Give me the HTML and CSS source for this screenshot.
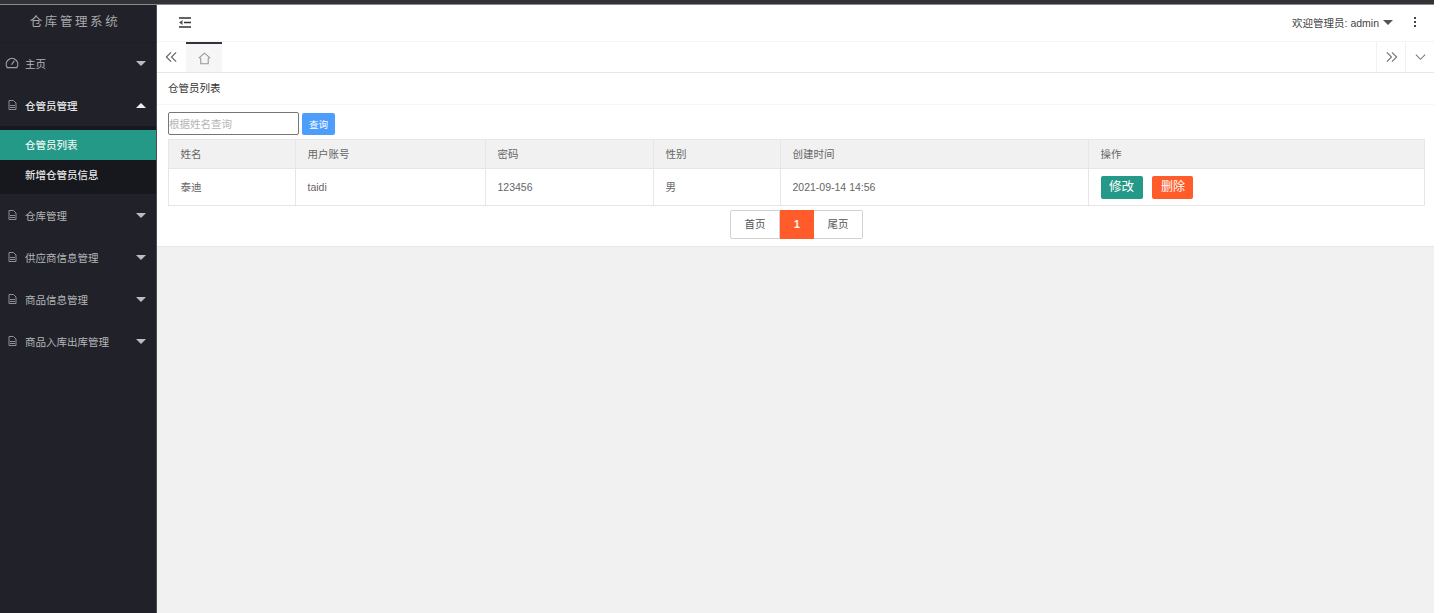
FILE: index.html
```html
<!DOCTYPE html>
<html lang="zh-CN">
<head>
    <meta charset="UTF-8">
    <title>仓库管理系统</title>
    <link rel="stylesheet" href="styles.css">
</head>
<body>
    <div class="topline"></div>
    <div class="layout">
        <aside class="side">
            <div class="logo">仓库管理系统</div>
            <ul class="nav">
                <li class="nav-item">
                    <svg class="nav-icon" viewBox="0 0 16 16"><path d="M2.6 13.2a6.6 6.6 0 1 1 10.8 0z" fill="none" stroke="currentColor" stroke-width="1.4"/><path d="M7.400 10 10.600 5.600" stroke="currentColor" stroke-width="1.4"/></svg>
                    <span class="nav-text">主页</span><span class="caret"></span>
                </li>
                <li class="nav-item open">
                    <svg class="nav-icon small" viewBox="0 0 9 10"><path d="M1 .5h4.500L8 3v6.500H1z" fill="none" stroke="currentColor"/><path d="M2 5.500h5M2 7.500h5" stroke="currentColor"/></svg>
                    <span class="nav-text">仓管员管理</span><span class="caret up"></span>
                </li>
                <li class="sub">
                    <div class="sub-item active">仓管员列表</div>
                    <div class="sub-item">新增仓管员信息</div>
                </li>
                <li class="nav-item">
                    <svg class="nav-icon small" viewBox="0 0 9 10"><path d="M1 .5h4.500L8 3v6.500H1z" fill="none" stroke="currentColor"/><path d="M2 5.500h5M2 7.500h5" stroke="currentColor"/></svg>
                    <span class="nav-text">仓库管理</span><span class="caret"></span>
                </li>
                <li class="nav-item">
                    <svg class="nav-icon small" viewBox="0 0 9 10"><path d="M1 .5h4.500L8 3v6.500H1z" fill="none" stroke="currentColor"/><path d="M2 5.500h5M2 7.500h5" stroke="currentColor"/></svg>
                    <span class="nav-text">供应商信息管理</span><span class="caret"></span>
                </li>
                <li class="nav-item">
                    <svg class="nav-icon small" viewBox="0 0 9 10"><path d="M1 .5h4.500L8 3v6.500H1z" fill="none" stroke="currentColor"/><path d="M2 5.500h5M2 7.500h5" stroke="currentColor"/></svg>
                    <span class="nav-text">商品信息管理</span><span class="caret"></span>
                </li>
                <li class="nav-item">
                    <svg class="nav-icon small" viewBox="0 0 9 10"><path d="M1 .5h4.500L8 3v6.500H1z" fill="none" stroke="currentColor"/><path d="M2 5.500h5M2 7.500h5" stroke="currentColor"/></svg>
                    <span class="nav-text">商品入库出库管理</span><span class="caret"></span>
                </li>
            </ul>
        </aside>

        <main class="main">
            <header class="header">
                <svg class="flex-icon" viewBox="0 0 12 11"><path d="M0 1h12M5 5.500h7M0 10h12" fill="none" stroke="#333" stroke-width="1.3"/><path d="M3.500 3v5L0 5.500z" fill="#555"/></svg>
                <div class="user">欢迎管理员: admin<span class="user-caret"></span></div>
                <div class="dots"><i></i><i></i><i></i></div>
            </header>

            <div class="tabs">
                <div class="tab-btn left">
                    <svg viewBox="0 0 14 12"><path d="M6.500 1 1.500 6l5 5M12 1 7 6l5 5" fill="none" stroke="#666" stroke-width="1.3"/></svg>
                </div>
                <div class="tab-home">
                    <svg viewBox="0 0 14 14"><path d="M7 1.200 1.400 6 3 7v5.600h8V7l1.600-1z" fill="none" stroke="#999" stroke-width="1.2"/></svg>
                </div>
                <div class="tab-space"></div>
                <div class="tab-btn right">
                    <svg viewBox="0 0 14 12"><path d="M2 1l5 5-5 5M7.500 1l5 5-5 5" fill="none" stroke="#777" stroke-width="1.3"/></svg>
                </div>
                <div class="tab-btn right">
                    <svg viewBox="0 0 14 12"><path d="M2 3.500l5 5 5-5" fill="none" stroke="#777" stroke-width="1.1"/></svg>
                </div>
            </div>

            <section class="panel">
                <div class="panel-title">仓管员列表</div>
                <div class="panel-body">
                    <form class="search">
                        <input class="search-input" type="text" placeholder="根据姓名查询">
                        <button type="button" class="search-btn">查询</button>
                    </form>
                    <table class="grid">
                        <colgroup>
                            <col class="c1"><col class="c2"><col class="c3"><col class="c4"><col class="c5"><col>
                        </colgroup>
                        <thead>
                            <tr><th>姓名</th><th>用户账号</th><th>密码</th><th>性别</th><th>创建时间</th><th>操作</th></tr>
                        </thead>
                        <tbody>
                            <tr>
                                <td>泰迪</td>
                                <td>taidi</td>
                                <td>123456</td>
                                <td>男</td>
                                <td>2021-09-14 14:56</td>
                                <td>
                                    <a class="act green">修改</a>
                                    <a class="act red">删除</a>
                                </td>
                            </tr>
                        </tbody>
                    </table>
                    <div class="pager">
                        <a class="page first">首页</a><a class="page current">1</a><a class="page last">尾页</a>
                    </div>
                </div>
            </section>
        </main>
    </div>
</body>
</html>
```

FILE: styles.css
```css
* {
    margin: 0;
    padding: 0;
    box-sizing: border-box;
}

html, body {
    height: 100%;
}

body {
    font-family: "Liberation Sans", "Noto Sans CJK SC", sans-serif;
    font-size: 10.5px;
    color: #666;
    background: #fff;
    overflow: hidden;
}

ul {
    list-style: none;
}

.topline {
    width: 1434px;
    height: 5px;
    background: #333337;
    border-bottom: 1px solid #8a8a8a;
}

.layout {
    width: 1434px;
    height: 608px;
    display: flex;
}

/* left menu */
.side {
    width: 157px;
    flex: none;
    background: #212229;
    border-right: 1px solid #4a4c52;
}

.logo {
    height: 37px;
    line-height: 35px;
    padding-right: 6px;
    text-align: center;
    font-size: 12.5px;
    letter-spacing: 2.6px;
    color: #a8a9ac;
    box-shadow: 0 1px 0 #1d1f26;
}

.nav-item {
    height: 42px;
    display: flex;
    align-items: center;
    padding: 0 10px 0 5px;
    color: #b5b6b8;
}

.nav-item.open {
    color: #e8e8e8;
    font-weight: 500;
}

.nav-icon {
    width: 14px;
    height: 14px;
    margin-right: 6px;
    color: #a0a1a4;
}

.nav-icon.small {
    width: 9px;
    height: 10px;
    margin: 0 8px 0 3px;
    color: #8f9094;
}

.nav-text {
    flex: 1;
}

.caret {
    border-left: 5.500px solid transparent;
    border-right: 5.500px solid transparent;
    border-top: 5px solid #bdbdbf;
}

.caret.up {
    border-top: 0;
    border-bottom: 5px solid #eee;
}

.sub {
    padding: 4px 0;
    background: #17181d;
}

.sub-item {
    height: 30px;
    line-height: 30px;
    padding-left: 25px;
    color: #e6e6e6;
    font-weight: 500;
}

.sub-item.active {
    background: #259987;
    color: #e8f4f2;
}

/* right side */
.main {
    flex: 1;
    background: #f1f1f1;
}

.header {
    height: 37px;
    background: #fff;
    display: flex;
    align-items: center;
    padding: 0 18px 2px 22px;
    border-bottom: 1px solid #f4f4f4;
}

.flex-icon {
    width: 12px;
    height: 11px;
}

.user {
    margin-left: auto;
    color: #444;
    font-size: 10.5px;
    display: flex;
    align-items: center;
}

.user-caret {
    border-left: 5px solid transparent;
    border-right: 5px solid transparent;
    border-top: 5px solid #555;
    margin-left: 4px;
}

.dots {
    margin-left: 21px;
    display: flex;
    flex-direction: column;
    gap: 2px;
}

.dots i {
    display: block;
    width: 2px;
    height: 2px;
    background: #444;
}

.tabs {
    height: 31px;
    display: flex;
    background: #fff;
    border-bottom: 1px solid #e6e6e6;
}

.tab-btn {
    width: 29px;
    display: flex;
    align-items: center;
    justify-content: center;
}

.tab-btn.right {
    border-left: 1px solid #f2f2f2;
}

.tab-btn svg {
    width: 13px;
    height: 12px;
}

.tab-home {
    width: 36px;
    background: #f6f6f6;
    border-top: 2px solid #33333f;
    display: flex;
    align-items: center;
    justify-content: center;
}

.tab-home svg {
    width: 13px;
    height: 13px;
}

.tab-space {
    flex: 1;
}

.panel {
    background: #fff;
    height: 174px;
    border-bottom: 1px solid #e6e6e6;
}

.panel-title {
    height: 32px;
    line-height: 30px;
    padding-left: 11px;
    color: #333;
    border-bottom: 1px solid #f6f6f6;
}

.panel-body {
    padding: 7px 9px 0 11px;
}

.search {
    display: flex;
    align-items: flex-start;
    gap: 3px;
    height: 27px;
}

.search-input {
    width: 131px;
    height: 23px;
    border: 1px solid #767676;
    border-radius: 2px;
    padding: 0;
    font-family: inherit;
    font-size: 10.5px;
    outline: none;
}

.search-input::placeholder {
    color: #b5b5b5;
}

.search-btn {
    width: 33px;
    height: 22px;
    margin-top: 1px;
    border: none;
    border-radius: 2px;
    background: #4d9efc;
    color: #fff;
    font-family: inherit;
    font-size: 9.500px;
}

.grid {
    width: 100%;
    table-layout: fixed;
    border-collapse: collapse;
}

.c1 { width: 127px; }
.c2 { width: 190px; }
.c3 { width: 168px; }
.c4 { width: 127px; }
.c5 { width: 308px; }

.grid th, .grid td {
    border: 1px solid #e6e6e6;
    padding: 0 11.500px 1px;
    text-align: left;
    font-weight: normal;
    color: #666;
}

.grid th {
    height: 29px;
    background: #f1f1f1;
}

.grid td {
    height: 37px;
}

.act {
    display: inline-block;
    height: 23px;
    line-height: 23px;
    margin-top: 1px;
    text-align: center;
    border-radius: 2px;
    color: #fff;
}

.act.green {
    width: 42px;
    background: #259987;
    font-size: 12.5px;
}

.act.red {
    width: 41px;
    margin-left: 7px;
    background: #ff5b2b;
    font-size: 12px;
}

.pager {
    display: flex;
    justify-content: center;
    margin-top: 4px;
}

.page {
    height: 29px;
    line-height: 27px;
    text-align: center;
    color: #555;
    border: 1px solid #d2d2d2;
}

.page.first {
    width: 50px;
    border-radius: 2px 0 0 2px;
}

.page.current {
    width: 34px;
    border: none;
    line-height: 29px;
    background: #ff5b2b;
    color: #fff;
    font-weight: bold;
}

.page.last {
    width: 49px;
    border-left: none;
    border-radius: 0 2px 2px 0;
}
```
